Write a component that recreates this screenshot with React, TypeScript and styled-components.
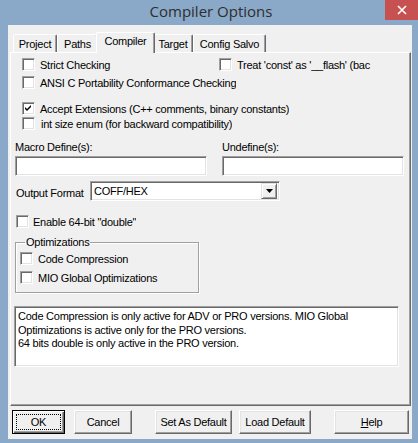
import React from 'react';
import styled, { createGlobalStyle } from 'styled-components';

const GlobalStyle = createGlobalStyle`
  html, body {
    margin: 0;
    padding: 0;
    background: #8aa8c7;
  }
  body {
    font-family: "Liberation Sans", Arial, sans-serif;
    font-size: 11px;
    letter-spacing: -0.25px;
    color: #000;
  }
`;

const Window = styled.div`
  width: 418px;
  height: 443px;
  background: #8aa8c7;
  display: flex;
  flex-direction: column;
  overflow: hidden;
`;

const TitleBar = styled.div`
  height: 25px;
  display: grid;
  grid-template-columns: 1fr auto 1fr;
  align-items: start;
`;

const Title = styled.div`
  font-family: "Open Sans", "Noto Sans", sans-serif;
  font-size: 15px;
  letter-spacing: 0;
  color: #2e2e2e;
  line-height: 22px;
  padding-left: 4px;
`;

const CloseButton = styled.div`
  justify-self: end;
  width: 33px;
  height: 20px;
  background: #c75050;
  display: flex;
  align-items: center;
  justify-content: center;
`;

const Client = styled.div`
  margin: 0 6px 4px 8px;
  flex: 1;
  background: #f0f0f0;
  padding: 7px 0 0 2px;
  display: flex;
  flex-direction: column;
`;

const TabStrip = styled.div`
  display: flex;
  align-items: flex-end;
  padding-left: 3px;
  height: 20px;
  position: relative;
  z-index: 1;
`;

const Tab = styled.div<{ $active?: boolean; $w: number }>`
  width: ${p => p.$w}px;
  box-sizing: border-box;
  height: ${p => (p.$active ? 21 : 18)}px;
  margin-bottom: ${p => (p.$active ? -1 : 0)}px;
  margin-left: ${p => (p.$active ? -2 : 0)}px;
  margin-right: ${p => (p.$active ? -2 : 0)}px;
  background: #f0f0f0;
  border-top: 1px solid #fff;
  border-left: 1px solid #fff;
  border-right: 1px solid #696969;
  box-shadow: inset -1px 0 0 #a0a0a0;
  border-radius: 2px 2px 0 0;
  display: flex;
  align-items: ${p => (p.$active ? 'flex-start' : 'center')};
  padding-top: ${p => (p.$active ? 2 : 0)}px;
  justify-content: center;
  position: relative;
  z-index: ${p => (p.$active ? 2 : 0)};
`;

const Panel = styled.div`
  width: 401px;
  height: 354px;
  box-sizing: border-box;
  border-top: 1px solid #fff;
  border-left: 1px solid #fff;
  border-right: 1px solid #696969;
  border-bottom: 1px solid #696969;
  box-shadow: inset -1px -1px 0 #a0a0a0;
  padding: 4px 0 0 0;
`;

const CheckRow = styled.div<{ $top: number; $left: number }>`
  display: flex;
  align-items: center;
  height: 13px;
  margin-top: ${p => p.$top}px;
  padding-left: ${p => p.$left}px;
`;

const CheckItem = styled.label<{ $width?: number; $gap?: number }>`
  display: flex;
  align-items: center;
  gap: ${p => p.$gap ?? 5}px;
  width: ${p => (p.$width ? `${p.$width}px` : 'auto')};
  white-space: nowrap;
  overflow: hidden;
  flex-shrink: 0;
`;

const Box = styled.span`
  width: 13px;
  height: 13px;
  box-sizing: border-box;
  flex-shrink: 0;
  background: #fff;
  border-top: 1px solid #a0a0a0;
  border-left: 1px solid #a0a0a0;
  border-right: 1px solid #fff;
  border-bottom: 1px solid #fff;
  box-shadow: inset 1px 1px 0 #696969, inset -1px -1px 0 #e3e3e3;
  display: flex;
  align-items: center;
  justify-content: center;
`;

const Check = ({ checked }: { checked?: boolean }) => (
  <Box>
    {checked && (
      <svg width="7" height="7" viewBox="0 0 7 7">
        <path d="M0 2 L2 4 L6 0 L6 2 L2 6 L0 4 Z" fill="#000" />
      </svg>
    )}
  </Box>
);

const FieldRow = styled.div`
  display: flex;
  gap: 15px;
  margin-top: 11px;
  padding-left: 4px;
`;

const Field = styled.div<{ $w: number }>`
  width: ${p => p.$w}px;
  display: flex;
  flex-direction: column;
  gap: 3px;
`;

const Sunken = styled.div`
  box-sizing: border-box;
  background: #fff;
  border-top: 1px solid #a0a0a0;
  border-left: 1px solid #a0a0a0;
  border-right: 1px solid #fff;
  border-bottom: 1px solid #fff;
  box-shadow: inset 1px 1px 0 #696969, inset -1px -1px 0 #e3e3e3;
`;

const TextBox = styled(Sunken)`
  height: 20px;
`;

const OutputRow = styled.div`
  display: flex;
  align-items: flex-end;
  margin-top: 5px;
  padding-left: 5px;
`;

const OutputLabel = styled.span`
  width: 74px;
  margin-bottom: 2px;
  white-space: nowrap;
`;

const Combo = styled(Sunken)`
  width: 190px;
  height: 20px;
  display: flex;
  align-items: center;
  justify-content: space-between;
  padding: 2px 2px 2px 3px;
`;

const ComboButton = styled.div`
  width: 16px;
  height: 16px;
  box-sizing: border-box;
  background: #f0f0f0;
  border-top: 1px solid #e3e3e3;
  border-left: 1px solid #e3e3e3;
  border-right: 1px solid #696969;
  border-bottom: 1px solid #696969;
  box-shadow: inset 1px 1px 0 #fff, inset -1px -1px 0 #a0a0a0;
  display: flex;
  align-items: center;
  justify-content: center;
`;

const Group = styled.fieldset`
  width: 184px;
  height: 56px;
  box-sizing: border-box;
  margin: 9px 0 0 4px;
  padding: 4px 0 0 4px;
  border: 1px solid #a0a0a0;
  box-shadow: 1px 1px 0 #fff, inset 1px 1px 0 #fff;
  display: flex;
  flex-direction: column;
  gap: 6px;
  min-width: 0;

  legend {
    padding: 0 1px;
    margin-left: 5px;
    line-height: 11px;
  }
`;

const GroupCheck = styled.label`
  display: flex;
  align-items: center;
  gap: 5px;
  height: 13px;
`;

const Notes = styled(Sunken)`
  width: 385px;
  height: 61px;
  margin: 13px 0 0 3px;
  padding: 3px 3px;
  line-height: 13.5px;
`;

const ButtonRow = styled.div`
  display: flex;
  margin-top: 4px;
  height: 24px;
`;

const Button = styled.div<{ $w: number; $gap: number; $default?: boolean }>`
  width: ${p => p.$w}px;
  height: 24px;
  margin-left: ${p => p.$gap}px;
  box-sizing: border-box;
  background: #f0f0f0;
  border-top: 1px solid ${p => (p.$default ? '#000' : '#fff')};
  border-left: 1px solid ${p => (p.$default ? '#000' : '#fff')};
  border-right: 1px solid ${p => (p.$default ? '#000' : '#696969')};
  border-bottom: 1px solid ${p => (p.$default ? '#000' : '#696969')};
  box-shadow: ${p =>
    p.$default
      ? 'inset 1px 1px 0 #fff, inset -1px -1px 0 #696969, inset -2px -2px 0 #a0a0a0'
      : 'inset -1px -1px 0 #a0a0a0, inset 1px 1px 0 #e3e3e3'};
  display: flex;
  align-items: center;
  justify-content: center;
  font-size: 11px;
`;

const Focus = styled.span`
  border: 1px dotted #000;
  width: 45px;
  height: 16px;
  box-sizing: border-box;
  display: flex;
  align-items: center;
  justify-content: center;
`;

const tabs = [
  { name: 'Project', w: 44 },
  { name: 'Paths', w: 41 },
  { name: 'Compiler', w: 59, active: true },
  { name: 'Target', w: 40 },
  { name: 'Config Salvo', w: 73 },
];

export default function App() {
  return (
    <>
      <GlobalStyle />
      <Window>
        <TitleBar>
          <div />
          <Title>Compiler Options</Title>
          <CloseButton>
            <svg width="10" height="10" viewBox="0 0 10 10">
              <path d="M1 1 L9 9 M9 1 L1 9" stroke="#fff" strokeWidth="1.6" />
            </svg>
          </CloseButton>
        </TitleBar>
        <Client>
          <TabStrip>
            {tabs.map(t => (
              <Tab key={t.name} $w={t.w} $active={t.active}>
                {t.name}
              </Tab>
            ))}
          </TabStrip>
          <Panel>
            <CheckRow $top={1} $left={11}>
              <CheckItem $width={197}>
                <Check />Strict Checking
              </CheckItem>
              <CheckItem $width={152}>
                <Check />Treat 'const' as '__flash' (bac
              </CheckItem>
            </CheckRow>
            <CheckRow $top={5} $left={11}>
              <CheckItem>
                <Check />ANSI C Portability Conformance Checking
              </CheckItem>
            </CheckRow>
            <CheckRow $top={13} $left={11}>
              <CheckItem>
                <Check checked />Accept Extensions (C++ comments, binary constants)
              </CheckItem>
            </CheckRow>
            <CheckRow $top={2} $left={11}>
              <CheckItem $gap={6}>
                <Check />int size enum (for backward compatibility)
              </CheckItem>
            </CheckRow>
            <FieldRow>
              <Field $w={192}>
                Macro Define(s):
                <TextBox />
              </Field>
              <Field $w={182}>
                Undefine(s):
                <TextBox />
              </Field>
            </FieldRow>
            <OutputRow>
              <OutputLabel>Output Format</OutputLabel>
              <Combo>
                COFF/HEX
                <ComboButton>
                  <svg width="7" height="4" viewBox="0 0 7 4">
                    <path d="M0 0 H7 L3.5 4 Z" fill="#000" />
                  </svg>
                </ComboButton>
              </Combo>
            </OutputRow>
            <CheckRow $top={14} $left={5}>
              <CheckItem $gap={4}>
                <Check />Enable 64-bit "double"
              </CheckItem>
            </CheckRow>
            <Group>
              <legend>Optimizations</legend>
              <GroupCheck>
                <Check />Code Compression
              </GroupCheck>
              <GroupCheck>
                <Check />MIO Global Optimizations
              </GroupCheck>
            </Group>
            <Notes>
              Code Compression is only active for ADV or PRO versions. MIO Global
              Optimizations is active only for the PRO versions.
              <br />
              64 bits double is only active in the PRO version.
            </Notes>
          </Panel>
          <ButtonRow>
            <Button $w={53} $gap={2} $default>
              <Focus>OK</Focus>
            </Button>
            <Button $w={58} $gap={9}>Cancel</Button>
            <Button $w={77} $gap={23}>Set As Default</Button>
            <Button $w={72} $gap={7}>Load Default</Button>
            <Button $w={75} $gap={23}>
              <span>
                <u>H</u>elp
              </span>
            </Button>
          </ButtonRow>
        </Client>
      </Window>
    </>
  );
}
